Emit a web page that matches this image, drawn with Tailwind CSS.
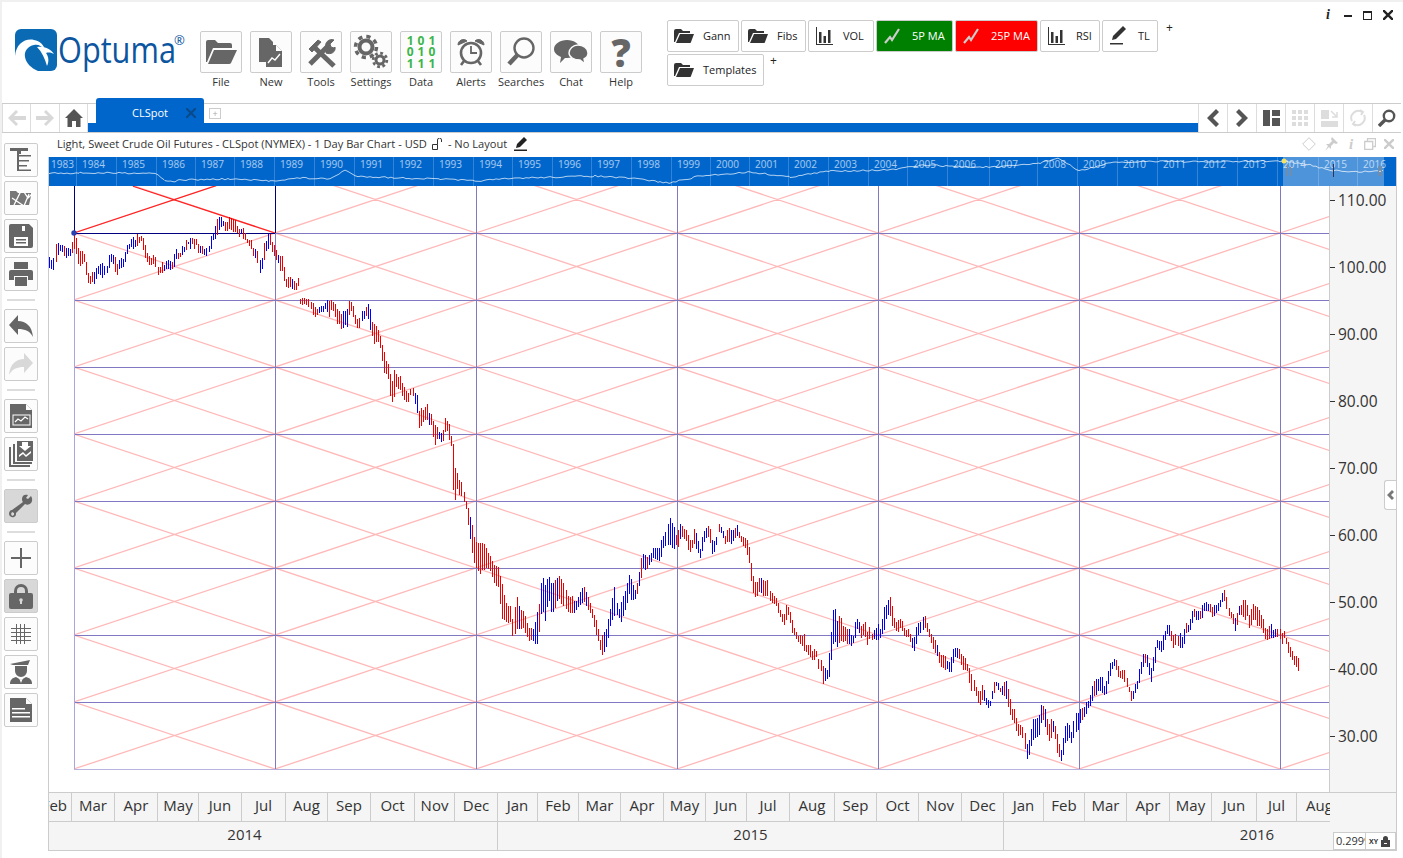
<!DOCTYPE html>
<html lang="en">
<head>
<meta charset="UTF-8">
<title>Optuma</title>
<script src="https://cdn.jsdelivr.net/npm/@tailwindcss/browser@4"></script>
</head>
<body class="h-[858px] w-[1403px] overflow-hidden bg-white font-['Open_Sans',sans-serif] text-[#333]">
<div class="flex h-[858px] w-[1403px] flex-col border-t-2 border-l-2 border-[#f0f0f0]">

  <!-- header -->
  <header class="flex h-[101px] shrink-0 items-start">
    <div class="mt-[27px] ml-[13px] flex h-[42px] w-[185px] shrink-0 items-start">
      <svg class="shrink-0" width="42" height="42" viewBox="0 0 42 42">
        <rect width="42" height="42" rx="6" fill="#0a6ab4"/>
        <path d="M0 42V27C1 15 10 9 19 11c6 1 10 5 11 10-3-4-7-6-11-5-6 1-10 6-9 12 1 6 6 11 13 14z" fill="#fff"/>
        <path d="M22 18c6-1 13 1 17 7-2-1-5-2-8-1 3 4 3 9 1 13-2-7-5-14-10-19z" fill="#fff"/>
      </svg>
      <div class="mt-[-3px] ml-[1px] flex items-start">
        <span class="inline-block w-[116px] origin-left scale-x-[0.83] text-[37px] leading-[46px] font-medium whitespace-nowrap text-[#0c559f]">Optuma</span>
        <span class="mt-[8px] text-[13px] leading-none text-[#0c559f]">®</span>
      </div>
    </div>

    <nav class="mt-[29px] ml-[0px] flex gap-[8px] text-[11px]">
      <div class="flex w-[42px] flex-col items-center">
        <div class="flex h-[42px] w-[42px] items-center justify-center rounded-[2px] border border-[#ccc] bg-[#fcfcfc]">
          <svg width="34" height="30" viewBox="0 0 34 30" fill="#666"><path d="M2 5q0-2 2-2h7l3 3h12q2 0 2 2v3H9L3 25H2z"/><path d="M10 13h23l-6 13q-.5 1-2 1H4z"/></svg>
        </div>
        <span class="mt-[1px] whitespace-nowrap">File</span>
      </div>
      <div class="flex w-[42px] flex-col items-center">
        <div class="flex h-[42px] w-[42px] items-center justify-center rounded-[2px] border border-[#ccc] bg-[#fcfcfc]">
          <svg width="30" height="32" viewBox="0 0 30 32"><path d="M3 2h10l4 4v6h-6v14H3z" fill="#666"/><path d="M10 9h10l6 6v16H10z" fill="#666"/><path d="M20 9v6h6z" fill="#fff"/><path d="M12 27l4-5 3 2 5-6" fill="none" stroke="#fff" stroke-width="1.4"/></svg>
        </div>
        <span class="mt-[1px] whitespace-nowrap">New</span>
      </div>
      <div class="flex w-[42px] flex-col items-center">
        <div class="flex h-[42px] w-[42px] items-center justify-center rounded-[2px] border border-[#ccc] bg-[#fcfcfc]">
          <svg width="32" height="32" viewBox="0 0 32 32" fill="none" stroke="#666"><path d="M8 10l21 20" stroke-width="5"/><path d="M4 13l9-9 3 2-9 10z" fill="#666" stroke-width="1"/><path d="M5 28L22 11" stroke-width="5"/><path d="M21 12c-2-5 3-10 8-8l-4 4 1 3 3 1 1-1c1 5-4 8-9 6z" fill="#666" stroke-width="1"/></svg>
        </div>
        <span class="mt-[1px] whitespace-nowrap">Tools</span>
      </div>
      <div class="flex w-[42px] flex-col items-center">
        <div class="flex h-[42px] w-[42px] items-center justify-center rounded-[2px] border border-[#ccc] bg-[#fcfcfc]">
          <svg width="36" height="36" viewBox="0 0 36 36" fill="none" stroke="#666"><circle cx="13" cy="13" r="6.5" stroke-width="4"/><circle cx="13" cy="13" r="10.5" stroke-width="3.5" stroke-dasharray="4.2 4.05"/><circle cx="27" cy="26" r="4" stroke-width="3"/><circle cx="27" cy="26" r="6.8" stroke-width="2.8" stroke-dasharray="2.8 2.54"/></svg>
        </div>
        <span class="mt-[1px] whitespace-nowrap">Settings</span>
      </div>
      <div class="flex w-[42px] flex-col items-center">
        <div class="flex h-[42px] w-[42px] items-center justify-center rounded-[2px] border border-[#ccc] bg-[#fcfcfc]">
          <div class="grid grid-cols-3 gap-x-[4px] text-center text-[12px] leading-[11.5px] font-bold text-[#3cb54a]">
            <span>1</span><span>0</span><span>1</span>
            <span>0</span><span>1</span><span>0</span>
            <span>1</span><span>1</span><span>1</span>
          </div>
        </div>
        <span class="mt-[1px] whitespace-nowrap">Data</span>
      </div>
      <div class="flex w-[42px] flex-col items-center">
        <div class="flex h-[42px] w-[42px] items-center justify-center rounded-[2px] border border-[#ccc] bg-[#fcfcfc]">
          <svg width="32" height="32" viewBox="0 0 32 32" fill="none" stroke="#666"><circle cx="16" cy="17" r="10" stroke-width="2.6"/><path d="M16 10v7h6" stroke-width="1.8"/><path d="M3 9c0-5 6-7 9-4zM29 9c0-5-6-7-9-4z" fill="#666" stroke-width="1"/><path d="M9 25l-3 4M23 25l3 4" stroke-width="2.6"/></svg>
        </div>
        <span class="mt-[1px] whitespace-nowrap">Alerts</span>
      </div>
      <div class="flex w-[42px] flex-col items-center">
        <div class="flex h-[42px] w-[42px] items-center justify-center rounded-[2px] border border-[#ccc] bg-[#fcfcfc]">
          <svg width="32" height="32" viewBox="0 0 32 32" fill="none" stroke="#666"><circle cx="19" cy="12" r="9.5" stroke-width="2.4"/><path d="M12.500 19L4 28" stroke-width="4.500"/></svg>
        </div>
        <span class="mt-[1px] whitespace-nowrap">Searches</span>
      </div>
      <div class="flex w-[42px] flex-col items-center">
        <div class="flex h-[42px] w-[42px] items-center justify-center rounded-[2px] border border-[#ccc] bg-[#fcfcfc]">
          <svg width="36" height="30" viewBox="0 0 36 30" fill="#666"><path d="M14 3c7 0 13 4 13 9s-6 9-13 9l-2 0-5 5 1-6c-4-2-7-4-7-8 0-5 6-9 13-9z"/><path d="M25 8c5 0 10 3 10 8 0 3-2 5-4 6l1 5-5-4c-6 0-11-3-11-7s4-8 9-8z" stroke="#fcfcfc" stroke-width="1.4"/></svg>
        </div>
        <span class="mt-[1px] whitespace-nowrap">Chat</span>
      </div>
      <div class="flex w-[42px] flex-col items-center">
        <div class="flex h-[42px] w-[42px] items-center justify-center rounded-[2px] border border-[#ccc] bg-[#fcfcfc] text-[38px] leading-none font-extrabold text-[#666]">?</div>
        <span class="mt-[1px] whitespace-nowrap">Help</span>
      </div>
    </nav>

    <div class="mt-[18px] ml-[25px] flex flex-col gap-[2px] text-[11px] text-[#222]">
      <div class="flex items-start gap-[2px]">
        <div class="flex h-[32px] w-[72px] items-center gap-[9px] rounded-[2px] border border-[#ccc] bg-white pl-[6px]">
          <svg width="20" height="14" viewBox="0 0 20 14" fill="#333"><path d="M0 2q0-2 2-2h5l2 2h7v2H5L1 13H0z"/><path d="M6 5h14l-3 8q0 1-1 1H2z"/></svg>
          <span>Gann</span>
        </div>
        <div class="flex h-[32px] w-[65px] items-center gap-[9px] rounded-[2px] border border-[#ccc] bg-white pl-[6px]">
          <svg width="20" height="14" viewBox="0 0 20 14" fill="#333"><path d="M0 2q0-2 2-2h5l2 2h7v2H5L1 13H0z"/><path d="M6 5h14l-3 8q0 1-1 1H2z"/></svg>
          <span>Fibs</span>
        </div>
        <div class="flex h-[32px] w-[66px] items-center gap-[10px] rounded-[2px] border border-[#ccc] bg-white pl-[7px]">
          <svg width="17" height="18" viewBox="0 0 17 18" fill="#333"><path d="M0 0h1v17h16v1H0z"/><path d="M3 5h2.500v11H3zM7.500 9H10v7H7.500zM12 3h2.500v13H12z"/></svg>
          <span>VOL</span>
        </div>
        <div class="flex h-[32px] w-[77px] items-center gap-[11px] rounded-[2px] border border-[#ccc] bg-[#008000] pl-[7px] text-white">
          <svg width="17" height="16" viewBox="0 0 17 16" fill="none" stroke="#ccc" stroke-width="2.200"><path d="M1 15l5-6 2 3 7-11"/></svg>
          <span>5P MA</span>
        </div>
        <div class="flex h-[32px] w-[83px] items-center gap-[11px] rounded-[2px] border border-[#ccc] bg-[#ff0000] pl-[7px] text-white">
          <svg width="17" height="16" viewBox="0 0 17 16" fill="none" stroke="#ccc" stroke-width="2.200"><path d="M1 15l5-6 2 3 7-11"/></svg>
          <span>25P MA</span>
        </div>
        <div class="flex h-[32px] w-[60px] items-center gap-[11px] rounded-[2px] border border-[#ccc] bg-white pl-[7px]">
          <svg width="17" height="18" viewBox="0 0 17 18" fill="#333"><path d="M0 0h1v17h16v1H0z"/><path d="M3 5h2.500v11H3zM7.500 9H10v7H7.500zM12 3h2.500v13H12z"/></svg>
          <span>RSI</span>
        </div>
        <div class="flex h-[32px] w-[56px] items-center gap-[11px] rounded-[2px] border border-[#ccc] bg-white pl-[7px]">
          <svg width="17" height="20" viewBox="0 0 17 20" fill="#333"><path d="M13 0l3 3-10 10-4 1 1-4z"/><path d="M0 17h13v1.500H0z"/></svg>
          <span>TL</span>
        </div>
        <span class="ml-[6px] text-[12px] leading-[16px]">+</span>
      </div>
      <div class="flex items-start">
        <div class="flex h-[32px] w-[97px] items-center gap-[9px] rounded-[2px] border border-[#ccc] bg-white pl-[6px]">
          <svg width="20" height="14" viewBox="0 0 20 14" fill="#333"><path d="M0 2q0-2 2-2h5l2 2h7v2H5L1 13H0z"/><path d="M6 5h14l-3 8q0 1-1 1H2z"/></svg>
          <span>Templates</span>
        </div>
        <span class="mt-[-1px] ml-[6px] text-[12px] leading-[16px]">+</span>
      </div>
    </div>

    <div class="mt-[6px] ml-[150px] flex items-center gap-[11px] text-[#222]">
      <span class="w-[10px] text-center font-['Liberation_Serif',serif] text-[14px] leading-[14px] font-bold italic">i</span>
      <span class="mt-[1px] h-[2px] w-[8px] bg-[#222]"></span>
      <span class="h-[9px] w-[9px] border border-t-2 border-[#222]"></span>
      <svg width="10" height="10" viewBox="0 0 10 10" stroke="#222" stroke-width="2.400"><path d="M0 0l10 10M10 0L0 10"/></svg>
    </div>
  </header>

  <!-- tab bar -->
  <div class="flex h-[30px] w-[1399px] shrink-0 border-y border-[#ccc]">
    <div class="flex w-[29px] items-center justify-center border-x border-[#ddd]">
      <svg width="18" height="16" viewBox="0 0 18 16" fill="#d8d8d8"><path d="M8 0l2 2-4 4h12v4H6l4 4-2 2-8-8z"/></svg>
    </div>
    <div class="flex w-[29px] items-center justify-center border-r border-[#ddd]">
      <svg width="18" height="16" viewBox="0 0 18 16" fill="#d8d8d8"><path d="M10 0l-2 2 4 4H0v4h12l-4 4 2 2 8-8z"/></svg>
    </div>
    <div class="flex w-[28px] items-center justify-center border-r border-[#ddd]">
      <svg width="18" height="18" viewBox="0 0 18 18" fill="#555"><path d="M9 0l9 9h-2.500v9H11v-6H7v6H2.500V9H0z"/></svg>
    </div>
    <div class="relative flex w-[1110px] flex-col justify-end">
      <div class="h-[9px] bg-[#0066cc]"></div>
      <div class="absolute top-[-6px] left-[8px] flex h-[26px] w-[108px] items-center rounded-t-[3px] bg-[#0066cc] pt-[4px] pl-[36px] text-[11px] text-white">
        CLSpot
        <svg class="ml-[18px]" width="10" height="10" viewBox="0 0 10 10" stroke="#0a4a8a" stroke-width="2.200"><path d="M0 0l10 10M10 0L0 10"/></svg>
      </div>
      <div class="absolute top-[4px] left-[121px] flex h-[11px] w-[12px] items-center justify-center border border-[#ccc] text-[9px] leading-none text-[#aaa]">+</div>
    </div>
    <div class="grid flex-1 grid-cols-7 *:flex *:items-center *:justify-center *:border-l *:border-[#ddd]">
      <div><svg width="12" height="18" viewBox="0 0 12 18" fill="#555"><path d="M9 0l3 3-6 6 6 6-3 3-9-9z"/></svg></div>
      <div><svg width="12" height="18" viewBox="0 0 12 18" fill="#555"><path d="M3 0L0 3l6 6-6 6 3 3 9-9z"/></svg></div>
      <div><svg width="17" height="16" viewBox="0 0 17 16" fill="#555"><path d="M0 0h7v16H0zM9 0h8v6H9zM9 8h8v8H9z"/></svg></div>
      <div><svg width="16" height="16" viewBox="0 0 16 16" fill="#ddd"><path d="M0 0h4v4H0zM6 0h4v4H6zM12 0h4v4h-4zM0 6h4v4H0zM6 6h4v4H6zM12 6h4v4h-4zM0 12h4v4H0zM6 12h4v4H6zM12 12h4v4h-4z"/></svg></div>
      <div><svg width="17" height="17" viewBox="0 0 17 17" fill="#ddd"><path d="M0 0h8v9H0zM0 11h17v6H0z"/><path d="M10 1l6 6M16 2v5h-5" fill="none" stroke="#ddd" stroke-width="1.500"/></svg></div>
      <div><svg width="18" height="18" viewBox="0 0 18 18" fill="none" stroke="#ddd" stroke-width="2"><path d="M3 12A7 7 0 0 1 13 3M15 6a7 7 0 0 1-10 9"/><path d="M11 1l3 2-2 3M7 17l-3-2 2-3"/></svg></div>
      <div><svg width="18" height="18" viewBox="0 0 18 18" fill="none" stroke="#555"><circle cx="11" cy="7" r="5.200" stroke-width="2.400"/><path d="M7 11l-6 6" stroke-width="3.400"/></svg></div>
    </div>
  </div>

  <!-- workspace -->
  <div class="flex min-h-0 flex-1">
    <aside class="flex w-[46px] shrink-0 flex-col gap-[4px] pt-[10px] pl-[2px]">
      <div class="flex h-[34px] w-[34px] items-center justify-center rounded-[2px] border border-[#ccc] bg-[#fcfcfc]">
        <svg width="24" height="24" viewBox="0 0 24 24" fill="#666"><path d="M1 0h18v3h-7v3H8V3H1zM8 6h2v17H8zM10 7h12v1.500H10zM10 12h10v1.500H10zM10 17h8v1.500h-8zM10 21.500h12V23H10z"/></svg>
      </div>
      <div class="flex h-[34px] w-[34px] items-center justify-center rounded-[2px] border border-[#ccc] bg-[#fcfcfc]">
        <svg width="24" height="20" viewBox="0 0 24 20"><path d="M1 3h6l2 2h13v3L20 17H1z" fill="#777"/><path d="M5 17L13 1l6 9 4-4M3 10l12 8 5-12" fill="none" stroke="#fff" stroke-width="1.300"/></svg>
      </div>
      <div class="flex h-[34px] w-[34px] items-center justify-center rounded-[2px] border border-[#ccc] bg-[#fcfcfc]">
        <svg width="24" height="24" viewBox="0 0 24 24"><path d="M2 0h18l4 4v18q0 2-2 2H2q-2 0-2-2V2q0-2 2-2z" fill="#666"/><path d="M13 2h3v5h-3z" fill="#fff"/><path d="M5 13h14v9H5z" fill="#fff"/><path d="M7 15h10v1.500H7zM7 18h10v1.500H7z" fill="#666"/></svg>
      </div>
      <div class="flex h-[34px] w-[34px] items-center justify-center rounded-[2px] border border-[#ccc] bg-[#fcfcfc]">
        <svg width="24" height="24" viewBox="0 0 24 24" fill="#666"><path d="M5 0h14v7H5z"/><path d="M2 8h20q2 0 2 2v8h-5v-4H5v4H0v-8q0-2 2-2z"/><path d="M6 15h12v9H6z"/></svg>
      </div>
      <div class="mx-[3px] my-[4px] h-[2px] w-[28px] bg-[#ddd]"></div>
      <div class="flex h-[34px] w-[34px] items-center justify-center rounded-[2px] border border-[#ccc] bg-[#fcfcfc]">
        <svg width="24" height="22" viewBox="0 0 24 22" fill="#666"><path d="M9 0v6c8 0 14 5 15 16-3-6-8-8-15-8v6L0 10z"/></svg>
      </div>
      <div class="flex h-[34px] w-[34px] items-center justify-center rounded-[2px] border border-[#ccc] bg-[#fcfcfc]">
        <svg width="24" height="22" viewBox="0 0 24 22" fill="#d8d8d8"><path d="M15 0v6C7 6 1 11 0 22c3-6 8-8 15-8v6l9-10z"/></svg>
      </div>
      <div class="mx-[3px] my-[4px] h-[2px] w-[28px] bg-[#ddd]"></div>
      <div class="flex h-[34px] w-[34px] items-center justify-center rounded-[2px] border border-[#ccc] bg-[#fcfcfc]">
        <svg width="24" height="24" viewBox="0 0 24 24"><path d="M1 0h16l6 6v18H1z" fill="#666"/><path d="M17 0v6h6z" fill="#fcfcfc"/><rect x="4" y="11" width="17" height="10" fill="none" stroke="#fff"/><path d="M6 18l3-3 3 2 4-4 3 2" fill="none" stroke="#fff" stroke-width="1.200"/></svg>
      </div>
      <div class="flex h-[34px] w-[34px] items-center justify-center rounded-[2px] border border-[#ccc] bg-[#fcfcfc]">
        <svg width="26" height="26" viewBox="0 0 26 26" fill="#666"><path d="M1 6h2v18h19v2H1z"/><path d="M5 3h2v18h17v2H5z"/><path d="M9 0h16v20H9z"/><path d="M14 1h6v4h3l-6 5-6-5h3zM11 14l4-3 3 3 5-4v2l-5 4-3-3-4 3z" fill="#fff"/></svg>
      </div>
      <div class="mx-[3px] my-[4px] h-[2px] w-[28px] bg-[#ddd]"></div>
      <div class="flex h-[34px] w-[34px] items-center justify-center rounded-[2px] border border-[#ccc] bg-[#d8d8d8]">
        <svg width="24" height="24" viewBox="0 0 24 24" fill="#666"><path d="M22 2l-3 3-2-1 2-3c-3-1-6 0-6 4 0 1 0 2 1 3L3 16c-2 0-3 2-3 4s3 4 5 3 2-2 2-4l9-9c2 1 4 1 6-1 1-1 2-4 0-7zM3 22l-1-2 1-2 2 1v2z"/></svg>
      </div>
      <div class="mx-[3px] my-[4px] h-[2px] w-[28px] bg-[#ddd]"></div>
      <div class="flex h-[34px] w-[34px] items-center justify-center rounded-[2px] border border-[#ccc] bg-[#fcfcfc]">
        <svg width="20" height="20" viewBox="0 0 20 20" fill="#666"><path d="M9 0h2v9h9v2h-9v9H9v-9H0V9h9z"/></svg>
      </div>
      <div class="flex h-[34px] w-[34px] items-center justify-center rounded-[2px] border border-[#ccc] bg-[#d8d8d8]">
        <svg width="24" height="26" viewBox="0 0 24 26" fill="#666"><path d="M5 11V8a7 7 0 0 1 14 0v3h-3V8a4 4 0 0 0-8 0v3z"/><path d="M2 10h20q2 0 2 2v12q0 2-2 2H2q-2 0-2-2V12q0-2 2-2z"/><circle cx="12" cy="17" r="1.800" fill="#d8d8d8"/><path d="M11 18h2v3h-2z" fill="#d8d8d8"/></svg>
      </div>
      <div class="flex h-[34px] w-[34px] items-center justify-center rounded-[2px] border border-[#ccc] bg-[#fcfcfc]">
        <svg width="20" height="20" viewBox="0 0 20 20" fill="#666"><path d="M5 0h1v20H5zM9 0h1v20H9zM13 0h1v20h-1zM0 4h20v1H0zM0 8h20v1H0zM0 12h20v1H0zM0 16h20v1H0z"/></svg>
      </div>
      <div class="flex h-[34px] w-[34px] items-center justify-center rounded-[2px] border border-[#ccc] bg-[#fcfcfc]">
        <svg width="24" height="24" viewBox="0 0 24 24" fill="#666"><path d="M1 4l20-4-2 5H4zM6 6h12v5a6 6 0 0 1-12 0z"/><path d="M7 17l5 3 5-3c4 1 6 3 6 7H1c0-4 2-6 6-7z"/><path d="M10 18l2 2 2-2-2 5z" fill="#fff"/></svg>
      </div>
      <div class="flex h-[34px] w-[34px] items-center justify-center rounded-[2px] border border-[#ccc] bg-[#fcfcfc]">
        <svg width="22" height="24" viewBox="0 0 22 24"><path d="M0 0h16l6 6v18H0z" fill="#666"/><path d="M16 0v6h6z" fill="#fcfcfc"/><path d="M2 10h13v1.500H2zM2 14h18v1.500H2zM2 18h18v1.500H2z" fill="#fff"/></svg>
      </div>
    </aside>

    <main class="flex w-[1349px] flex-col">
      <div class="flex h-[24px] shrink-0 items-center pb-[2px] pl-[9px] text-[11.1px]">
        <span>Light, Sweet Crude Oil Futures - CLSpot (NYMEX) - 1 Day Bar Chart - USD</span>
        <svg class="mx-[5px]" width="11" height="12" viewBox="0 0 11 12" fill="none" stroke="#333"><path d="M.5 6.500h5v5h-5zM5.500 6.500V2a2 2 0 0 1 4 0v2"/></svg>
        <span>- No Layout</span>
        <svg class="ml-[7px]" width="14" height="14" viewBox="0 0 14 14" fill="#222"><path d="M10 0l3 3-7 7-4 1 1-4z"/><path d="M0 12.500h13V14H0z"/></svg>
        <div class="ml-auto flex items-center gap-[8px] pr-[3px]">
          <svg width="14" height="14" viewBox="0 0 14 14" fill="none" stroke="#ccc"><path d="M7 .7L13.300 7 7 13.300.7 7z"/></svg>
          <svg width="14" height="14" viewBox="0 0 14 14" fill="#ccc"><path d="M8 0l6 6-2 1-2-1-3 3 0 3-2-2-4 4 3-5-2-2 3 0 3-3-1-2z"/></svg>
          <span class="w-[10px] text-center font-['Liberation_Serif',serif] text-[15px] leading-[14px] font-bold text-[#ccc] italic">i</span>
          <svg width="12" height="12" viewBox="0 0 12 12" fill="none" stroke="#ccc" stroke-width="1.300"><path d="M.7 3.500h8v8h-8zM3.500 3.500v-3h8v8h-2"/></svg>
          <svg width="10" height="10" viewBox="0 0 10 10" stroke="#ccc" stroke-width="2.400"><path d="M0 0l10 10M10 0L0 10"/></svg>
        </div>
      </div>

      <div class="flex w-[1349px] flex-col border-r border-b border-l border-[#ccc]">
        <!-- year navigator -->
        <div class="relative h-[29px] overflow-hidden bg-[#0066cc]">
          <div class="grid h-[29px] grid-cols-[28px_40px_40px_39px_39px_40px_40px_40px_39px_40px_40px_39px_40px_39px_40px_40px_39px_39px_39px_40px_40px_39px_40px_42px_48px_40px_40px_40px_40px_40px_40px_41px_39px_39px] text-[10px] leading-[14px] text-white/65 *:border-r *:border-white/20 *:pl-[5px] *:whitespace-nowrap">
            <span class="pl-[2px]!">1983</span><span>1984</span><span>1985</span><span>1986</span><span>1987</span><span>1988</span><span>1989</span><span>1990</span><span>1991</span><span>1992</span><span>1993</span><span>1994</span><span>1995</span><span>1996</span><span>1997</span><span>1998</span><span>1999</span><span>2000</span><span>2001</span><span>2002</span><span>2003</span><span>2004</span><span>2005</span><span>2006</span><span>2007</span><span>2008</span><span>2009</span><span>2010</span><span>2011</span><span>2012</span><span>2013</span><span>2014</span><span>2015</span><span>2016</span>
          </div>
          <div class="absolute top-0 left-[1234px] h-[29px] w-[101px] bg-white/30"></div>
          <svg class="absolute top-0 left-0" width="1347" height="29" viewBox="49 157 1347 29">
            <path id="mini" fill="none" stroke="#fff" stroke-opacity="0.7" stroke-width="1"/>
            <path d="M1287.500 165v11M1290.500 167v9M1378.500 166v10M1381.500 166v10" stroke="#888" fill="none"/>
            <path d="M1333.500 164v13" stroke="#335" fill="none"/>
            <circle cx="1284" cy="161" r="2.500" fill="#f3e26a"/>
          </svg>
        </div>

        <!-- chart and price scale -->
        <div class="flex h-[606px]">
          <svg class="w-[1280px] shrink-0" width="1280" height="606" viewBox="49 186 1280 606">
            <defs><clipPath id="grid"><rect x="74" y="186" width="1256" height="583.500"/></clipPath></defs>
            <path id="fan" clip-path="url(#grid)" fill="none" stroke="#ffb8b8" stroke-width="1.300"/>
            <path id="hgrid" fill="none" stroke="#8078c0" shape-rendering="crispEdges"/>
            <path d="M74.500 233V769" fill="none" stroke="#aaa6dc" shape-rendering="crispEdges"/>
            <path d="M74 769.500H1330" fill="none" stroke="#b8b4e0" shape-rendering="crispEdges"/>
            <path d="M74 233L216 185.700M133 186.300L275 233" fill="none" stroke="#ff2020" stroke-width="1.200"/>
            <path d="M74.500 186V233M275.500 186V233M74 233.500H275" fill="none" stroke="#000080" shape-rendering="crispEdges"/>
            <path id="up" fill="none" stroke="#0000ee" shape-rendering="crispEdges"/>
            <path id="down" fill="none" stroke="#ee0000" shape-rendering="crispEdges"/>
            <circle cx="74" cy="233" r="2.700" fill="#2a3fb0"/>
          </svg>
          <div class="relative flex w-[67px] shrink-0 flex-col gap-[47px] border-l border-[#ccc] bg-[#f5f5f5] pt-[4px] text-[15.500px] leading-[20px]">
            <div class="flex h-[20px] items-center"><span class="mr-[3px] h-px w-[5px] bg-[#333]"></span>110.00</div>
            <div class="flex h-[20px] items-center"><span class="mr-[3px] h-px w-[5px] bg-[#333]"></span>100.00</div>
            <div class="flex h-[20px] items-center"><span class="mr-[3px] h-px w-[5px] bg-[#333]"></span>90.00</div>
            <div class="flex h-[20px] items-center"><span class="mr-[3px] h-px w-[5px] bg-[#333]"></span>80.00</div>
            <div class="flex h-[20px] items-center"><span class="mr-[3px] h-px w-[5px] bg-[#333]"></span>70.00</div>
            <div class="flex h-[20px] items-center"><span class="mr-[3px] h-px w-[5px] bg-[#333]"></span>60.00</div>
            <div class="flex h-[20px] items-center"><span class="mr-[3px] h-px w-[5px] bg-[#333]"></span>50.00</div>
            <div class="flex h-[20px] items-center"><span class="mr-[3px] h-px w-[5px] bg-[#333]"></span>40.00</div>
            <div class="flex h-[20px] items-center"><span class="mr-[3px] h-px w-[5px] bg-[#333]"></span>30.00</div>
            <div class="absolute top-[294px] right-0 flex h-[30px] w-[12px] items-center justify-center rounded-l-[3px] border border-r-0 border-[#ccc] bg-white">
              <svg width="7" height="10" viewBox="0 0 7 10" fill="#777"><path d="M5 0l2 2-3 3 3 3-2 2-5-5z"/></svg>
            </div>
          </div>
        </div>

        <!-- time scale -->
        <div class="flex h-[58px] border-t border-[#ccc] bg-[#f5f5f5] text-[15px]">
          <div class="w-[1281px] shrink-0 overflow-hidden">
            <div class="grid h-[29px] grid-cols-[23px_43px_43px_41px_43px_44px_42px_43px_44px_40px_43px_40px_41px_42px_43px_42px_41px_43px_45px_42px_42px_43px_42px_40px_41px_42px_43px_42px_45px_40px_33px] border-b border-[#ccc] leading-[25px] *:overflow-hidden *:border-r *:border-[#ccc] *:text-center *:whitespace-nowrap">
              <div class="flex justify-end pr-[4px]">Feb</div><div>Mar</div><div>Apr</div><div>May</div><div>Jun</div><div>Jul</div><div>Aug</div><div>Sep</div><div>Oct</div><div>Nov</div><div>Dec</div><div>Jan</div><div>Feb</div><div>Mar</div><div>Apr</div><div>May</div><div>Jun</div><div>Jul</div><div>Aug</div><div>Sep</div><div>Oct</div><div>Nov</div><div>Dec</div><div>Jan</div><div>Feb</div><div>Mar</div><div>Apr</div><div>May</div><div>Jun</div><div>Jul</div><div class="border-r-0! pl-[9px] text-left!">Aug</div>
            </div>
            <div class="grid h-[28px] grid-cols-[449px_506px_326px] leading-[25px] *:text-center">
              <div class="border-r border-[#ccc] pr-[57px]">2014</div>
              <div class="border-r border-[#ccc]">2015</div>
              <div class="pl-[180px]">2016</div>
            </div>
          </div>
          <div class="flex w-[66px] items-end pb-[0px] pl-[3px]">
            <div class="flex h-[18px] w-[63px] border border-[#ccc] bg-white text-[11px]">
              <span class="w-[32px] overflow-hidden border-r border-[#ccc] pl-[2px] leading-[16px] whitespace-nowrap">0.2999</span>
              <div class="flex flex-1 items-center gap-[3px] pl-[3px]">
                <span class="text-[7px] leading-none font-bold">XY</span>
                <svg width="9" height="11" viewBox="0 0 9 11" fill="#444"><path d="M2 4V2.500a2.500 2.500 0 0 1 5 0V4h2v7H0V4z"/><path d="M3 7h3v1H3z" fill="#fff"/></svg>
              </div>
            </div>
          </div>
        </div>
      </div>
    </main>
  </div>
</div>

<script>
  // price bars, read off in crops: [x offset, y offset], then x, top, bottom triplets
  var segs = [
    [0, 140, [150,355,380, 156,368,396, 165,320,375, 172,306,350, 178,312,330, 190,315,340, 196,325,362, 202,322,350, 214,325,345, 220,275,325, 226,285,330, 232,312,365, 238,340,380, 244,325,380, 250,340,355, 256,355,395, 262,390,430, 268,412,430, 274,397,425, 280,398,435, 286,390,425, 292,375,408, 298,375,400, 304,365,415, 310,378,405, 316,378,408, 322,378,400, 328,340,382, 334,342,362, 340,345,375, 346,350,400, 352,375,405, 358,355,385, 364,352,382, 370,355,380, 376,330,365, 382,310,340, 388,315,325, 394,292,318, 400,292,325, 406,305,322, 412,280,320, 418,288,310, 424,288,305, 432,297,345, 438,335,360, 444,338,370, 450,352,375, 456,355,378, 462,340,372, 468,368,395, 474,380,408, 480,380,398, 486,365,402, 492,372,395, 498,365,385, 504,362,388, 510,365,388, 516,365,385, 522,345,378, 528,330,355, 534,340,355, 540,340,352, 546,320,345, 552,325,335, 558,298,328, 564,305,315, 570,295,325, 576,295,312, 582,295,330, 588,295,312, 594,310,335, 600,315,340, 606,320,340, 612,325,345, 620,325,350, 626,320,335, 632,290,330, 640,280,298, 648,245,295, 656,228,268, 662,230,260, 668,240,258, 674,245,275, 680,250,275, 686,230,262, 692,232,272, 698,238,278, 704,235,275, 710,255,278, 716,265,292, 722,265,282, 728,262,295, 734,278,298, 740,298,310, 746,298,318, 752,300,322, 758,322,345, 764,325,350, 770,325,372, 776,358,378, 781,360,402, 787,352,382, 793,305,358, 799,305,330, 805,280,330, 811,280,308, 817,315,345, 823,318,348, 829,335,362, 835,345,370, 841,348,395, 847,350,395, 853,390,430, 859,420,440, 865,412,440, 871,412,445, 877,420,448, 883,425,452, 889,432,448, 895,410,435]],
    [300, 300, [0,-5,15, 30,0,18, 43,15,52, 50,25,45, 55,25,42, 60,20,35, 66,18,35, 72,15,35, 78,0,20, 85,0,50, 90,0,42, 96,0,20, 103,5,45, 109,28,70, 115,25,65, 121,42,80, 127,35,95, 133,30,70, 139,35,92, 145,0,52, 151,5,30, 157,5,42, 163,38,68, 169,52,80, 175,62,92, 181,40,70, 187,32,62, 196,28,48, 202,12,45, 208,8,85, 214,68,95, 220,72,140, 226,70,122, 232,90,128, 238,92,130, 244,132,165, 250,145,225, 256,180,220, 262,185,222, 268,205,278, 274,255,305, 280,208,308, 286,215,255, 292,232,272, 298,225,262, 304,245,282, 310,258,302, 316,268,300, 322,280,315, 328,272,295, 334,246,275, 340,265,290, 346,280,315, 352,285,345, 358,338,390, 364,318,375, 370,328,362, 376,318,355, 382,310,365, 388,345,378, 394,345,370, 400,362,422, 406,380,440, 412,378,410, 418,398,420, 424,400,430, 430,390,422, 436,348,392, 442,365,395, 448,375,430, 454,418,440, 460,435,595, 466,515,600, 472,518,560, 478,543,585, 484,543,585, 490,567,600, 496,594,615]],
    [470, 500, [5,70,155, 15,130,205, 30,130,220, 45,135,205, 60,170,210, 70,190,250, 85,205,265, 95,250,355, 110,320,370, 120,315,365, 128,370,420, 140,285,385, 150,330,390, 160,330,385, 175,380,420, 190,390,425, 200,340,435, 210,295,375, 215,222,320, 225,255,360, 235,225,295, 245,255,345, 255,240,325, 265,225,290, 275,240,315, 285,265,325, 295,290,335, 305,285,340, 315,310,340, 325,290,320, 335,265,310, 340,260,300, 350,280,325, 365,325,350, 380,365,410, 390,420,450, 397,400,468, 410,380,440, 420,325,375, 433,258,345, 445,330,350, 455,300,365, 468,262,320, 477,225,285, 485,240,300, 495,270,300, 505,232,270, 512,175,240, 518,158,205, 530,170,208, 540,165,190, 552,140,170, 565,150,185, 572,122,178, 580,110,140, 590,85,135, 600,55,135, 612,80,145, 620,110,130, 626,80,145, 632,70,105, 640,90,115, 650,90,128, 656,115,165, 665,125,145, 672,90,130, 680,100,150, 690,150,178, 697,100,150, 703,95,120, 710,75,110, 718,80,115, 727,125,170, 735,125,150, 745,70,100, 752,75,95, 758,90,110, 765,110,130, 775,78,125, 785,95,130, 800,75,108, 808,95,115, 815,110,130, 825,115,148, 835,125,175]],
    [750, 570, [5,0,50, 12,30,85, 18,40,80, 25,25,70, 30,20,60, 37,30,75, 42,35,80, 50,28,80, 55,55,80, 62,72,100, 68,72,102, 75,85,100, 80,85,118, 90,118,140, 97,135,160, 103,130,165, 108,105,150, 115,112,130, 121,125,165, 128,160,195, 133,175,192, 140,192,210, 146,195,215, 152,195,225, 157,195,232, 163,192,245, 168,222,245, 178,225,260, 185,240,270, 192,240,270, 198,240,265, 205,270,300, 213,270,300, 220,288,345, 226,300,328, 232,300,325, 238,240,320, 244,180,262, 250,110,215, 256,120,218, 262,160,235, 268,130,212, 275,155,215, 281,172,215, 287,175,215, 293,180,230, 298,178,218, 305,205,228, 310,192,218, 316,150,200, 322,145,175, 332,170,208, 338,168,195, 345,155,200, 352,195,225, 358,170,205, 364,195,212, 370,180,205, 376,178,210, 382,155,215, 388,185,210, 395,155,195, 401,115,185, 406,105,155, 412,95,140, 418,78,120, 424,95,165, 430,130,170, 436,160,180, 442,150,195, 448,148,175, 455,148,178, 460,170,195, 466,178,200, 472,178,200, 478,185,210, 484,195,225, 490,215,245, 496,175,235, 502,165,195, 508,155,190, 514,165,190, 521,132,175, 527,145,175, 533,170,190, 540,185,215, 546,195,225, 552,205,245, 558,215,252, 564,232,265, 570,255,295, 576,255,295, 582,258,298, 588,265,300, 594,280,300, 600,280,318, 606,240,290, 612,228,262, 618,235,260, 624,232,265, 630,250,270, 636,255,300, 645,262,300, 652,285,305, 658,295,348, 664,318,365, 670,318,360, 676,348,370, 682,362,395, 688,370,408, 695,342,390, 700,355,385, 706,380,402, 712,385,415, 718,400,420, 725,370,388, 732,340,368, 738,332,350, 745,338,365, 750,352,370, 760,340,375, 767,330,385, 778,372,420, 784,415,455, 790,410,450, 796,435,480, 802,460,500, 808,465,495, 814,465,495, 820,478,525, 826,495,540, 832,530,575]],
    [1020, 570, [30,495,542, 37,452,508, 43,445,510, 50,445,500, 55,445,505, 62,402,465, 68,410,445, 75,415,470, 85,470,512, 92,445,512, 97,450,485, 104,465,495, 110,488,545, 116,515,555, 122,545,578, 128,508,560, 134,470,520, 140,458,512, 146,460,502, 152,488,518, 158,460,510, 164,430,475, 170,432,488, 176,430,475, 182,405,450, 188,418,455, 194,405,430, 200,395,430, 205,395,412, 212,372,410, 218,335,378, 224,330,378, 230,330,372, 236,330,355, 242,318,368, 248,320,370, 253,352,380, 260,328,365, 266,292,328, 272,275,315, 278,275,290, 284,262,285, 290,272,305, 296,295,332, 302,305,320, 308,300,330, 314,305,338, 320,320,348, 326,350,365, 331,355,390, 337,370,392, 344,342,370, 350,340,355, 355,305,350, 361,285,318, 367,252,298, 373,250,272, 379,255,290, 385,265,295, 391,305,348, 397,275,305, 403,240,300, 410,210,238, 415,210,238, 421,222,248, 427,200,248, 433,185,222, 439,172,195, 445,162,190, 451,175,205, 457,190,230, 463,195,232, 469,178,220, 475,200,230, 481,182,235, 487,202,238, 493,170,218, 499,158,185, 505,170,185, 511,140,175, 517,122,155, 523,115,140, 529,122,150, 535,125,150, 541,125,148, 547,105,145, 553,98,120, 559,95,122, 565,100,125, 571,105,125, 577,115,145, 583,105,135, 589,105,128, 595,100,122, 601,88,108, 607,68,90, 613,62,90, 619,85,120, 625,110,135, 631,125,145, 637,125,150, 643,145,180, 649,140,182, 655,108,135, 661,110,135, 667,88,132, 673,95,165, 679,88,120, 685,135,182, 691,130,165, 697,98,155, 703,105,135, 709,110,170, 715,112,170, 721,135,172, 727,135,178, 733,170,205, 737,178,205, 743,182,208, 749,160,205, 755,165,205, 761,185,200, 767,172,200, 773,178,205, 779,175,205, 785,190,225, 791,178,205, 797,198,215, 801,210,240, 807,225,255, 813,235,265, 819,255,280, 825,262,288, 832,262,302]]
  ];

  var seed = 7;
  function rnd() {
    seed = (seed * 16807) % 2147483647;
    return seed / 2147483647;
  }

  var keys = [];
  segs.forEach(function (s) {
    var d = s[2];
    for (var i = 0; i < d.length; i += 3) {
      keys.push([s[0] + d[i] / 3, s[1] + d[i + 1] / 3, s[1] + d[i + 2] / 3]);
    }
  });

  // one bar per trading day, about 2.04px apart
  var bars = [], k = 0;
  for (var day = 0; day < 613; day++) {
    var bx = Math.round(49.4 + 2.04 * day);
    while (k < keys.length - 2 && keys[k + 1][0] < bx) k++;
    var a = keys[k], b = keys[k + 1];
    var f = Math.max(0, Math.min(1, (bx - a[0]) / (b[0] - a[0])));
    var hi = Math.round(a[1] + (b[1] - a[1]) * f + (rnd() - 0.5) * 2);
    var lo = Math.round(a[2] + (b[2] - a[2]) * f + (rnd() - 0.5) * 2);
    bars.push([bx, hi, lo]);
  }

  var upBars = '', downBars = '';
  bars.forEach(function (bar, i) {
    var before = bars[Math.max(0, i - 3)], after = bars[Math.min(bars.length - 1, i + 3)];
    var rising = after[1] + after[2] < before[1] + before[2];
    if (rnd() < 0.08) rising = !rising;
    var d = 'M' + (bar[0] + 0.5) + ' ' + bar[1] + 'V' + bar[2];
    if (rising) upBars += d; else downBars += d;
  });
  document.getElementById('up').setAttribute('d', upBars);
  document.getElementById('down').setAttribute('d', downBars);

  // fan lines and grid
  var fan = '', gridLines = '';
  for (var n = -12; n < 24; n++) {
    var y0 = 233 + 67 * n;
    fan += 'M74 ' + y0 + 'L1330 ' + (y0 + 1256 / 3);
    fan += 'M74 ' + y0 + 'L1330 ' + (y0 - 1256 / 3);
  }
  for (var h = 0; h < 8; h++) gridLines += 'M74 ' + (233.5 + 67 * h) + 'H1330';
  for (var v = 1; v < 7; v++) gridLines += 'M' + (74.5 + 201 * v) + ' 186V769';
  document.getElementById('fan').setAttribute('d', fan);
  document.getElementById('hgrid').setAttribute('d', gridLines);

  // navigator line
  var pts = [49,173,80,173,155,173,165,180,172,182,180,180,230,179,270,181,300,178,330,179,345,170,355,176,400,178,440,179,475,181,520,178,560,177,595,176,640,179,660,182,670,183,700,176,750,172,790,177,830,171,890,170,925,165,968,167,1000,167,1040,163,1058,158,1079,171,1110,163,1160,161,1200,162,1280,161,1310,165,1330,170,1350,172,1380,171,1384,170];
  var miniLine = '';
  for (var p = 0; p < pts.length - 2; p += 2) {
    for (var t = pts[p]; t < pts[p + 2]; t += 3) {
      var g = (t - pts[p]) / (pts[p + 2] - pts[p]);
      var yy = pts[p + 1] + (pts[p + 3] - pts[p + 1]) * g + (rnd() - 0.5) * 1.6;
      miniLine += (miniLine ? 'L' : 'M') + t + ' ' + yy.toFixed(1);
    }
  }
  document.getElementById('mini').setAttribute('d', miniLine);
</script>
</body>
</html>
